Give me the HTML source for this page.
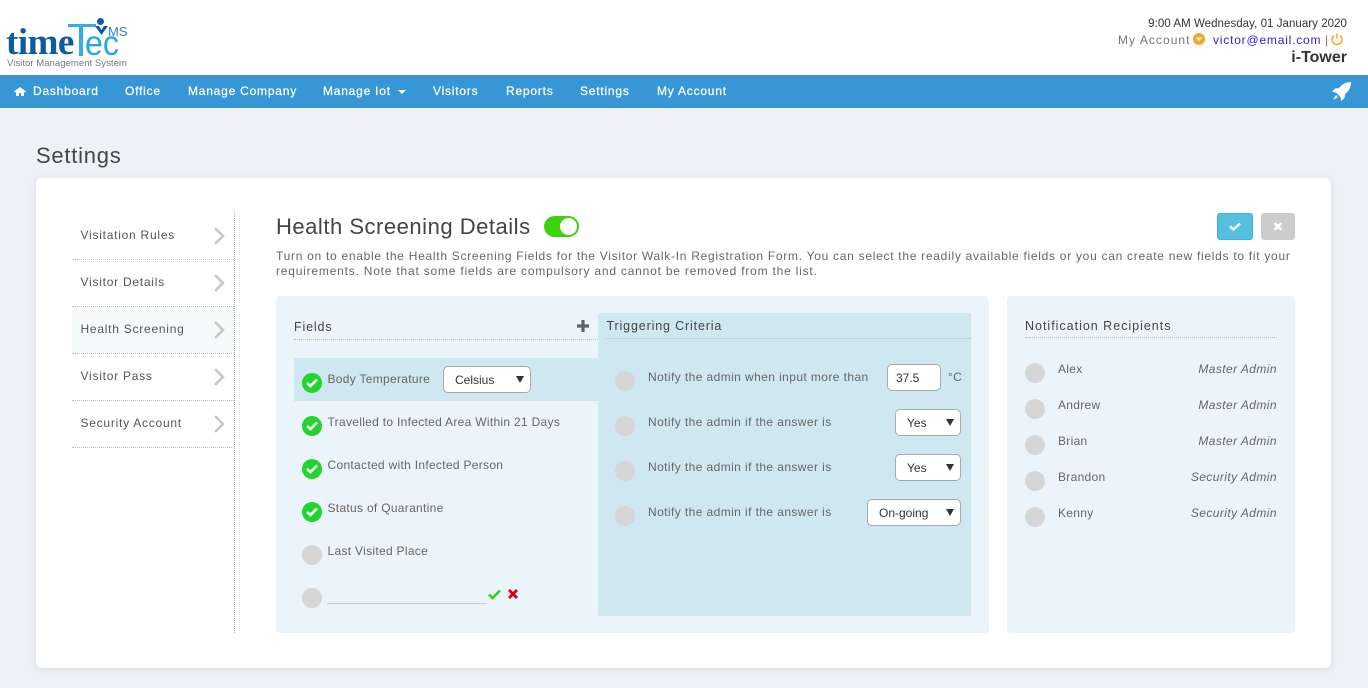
<!DOCTYPE html>
<html><head><meta charset="utf-8"><style>
*{box-sizing:border-box}
html,body{margin:0;padding:0}
body{width:1368px;height:688px;overflow:hidden;background:#eef2f6;position:relative;font-family:"Liberation Sans",sans-serif;font-size:12px;color:#666}
.a,.t{position:absolute;white-space:nowrap}
.t{letter-spacing:.3px;line-height:16px}
.n{letter-spacing:.41px}
.nav{color:#fff;top:83px;letter-spacing:.78px;font-size:12px;-webkit-text-stroke:.25px #fff}
.side{left:80.500px;color:#555;letter-spacing:.75px}
.hr{position:absolute;height:0;border-top:1px dotted #bbb}
.c{position:absolute;width:20px;height:20px;border-radius:50%;background:#d6d6d6}
.g{background:#22d52e}
.g svg{position:absolute;left:4px;top:5px}
.sel{position:absolute;height:27px;background:#fff;border:1px solid #a5aaad;border-radius:5px;color:#333;font-size:12px;line-height:26px;padding-left:11px}
.sel i{position:absolute;right:6px;top:9px;width:0;height:0;border-left:4px solid transparent;border-right:4px solid transparent;border-top:7px solid #333}
.r{text-align:right;font-style:italic;letter-spacing:.42px}
.h{font-size:12.500px;color:#444;letter-spacing:.85px}
</style></head><body>
<div class="a" style="left:0;top:0;width:1368px;height:75px;background:#fff"></div>
<!-- logo -->
<div class="a" style="left:6px;top:23px;font:bold 37px/40px 'Liberation Serif',serif;color:#0d5aa7;letter-spacing:-.5px">time</div>
<div class="a" style="left:68px;top:24px;width:28px;height:3px;background:#35ade4"></div>
<div class="a" style="left:78.500px;top:24px;width:4px;height:32px;background:#35ade4"></div>
<div class="a" style="left:84.500px;top:26px;font:35px/36px 'Liberation Sans',sans-serif;color:#2ba6e0;transform:scaleX(.92);transform-origin:0 0">ec</div>
<div class="a" style="left:96.500px;top:18px;width:7px;height:7px;border-radius:50%;background:#0d5aa7"></div>
<svg class="a" style="left:95px;top:26px" width="13" height="9"><path d="M0 0h4l2.500 4L9 0h4L6.500 9z" fill="#0d5aa7"/></svg>
<div class="a" style="left:108px;top:24px;font:13px/15px 'Liberation Sans',sans-serif;color:#3b7fb8">MS</div>
<div class="t" style="left:7px;top:57px;font-size:9.500px;color:#777;letter-spacing:.05px;line-height:14px">Visitor Management System</div>
<!-- top right -->
<div class="t" style="right:21px;top:16px;color:#333;letter-spacing:.05px;font-size:11.500px">9:00 AM Wednesday, 01 January 2020</div>
<div class="t" style="left:1118px;top:32px;color:#777;letter-spacing:1.05px">My Account</div>
<svg class="a" style="left:1193px;top:33px" width="12" height="12"><circle cx="6" cy="6" r="6" fill="#f5a623"/><path d="M3 4.500h6L6 8.500z" fill="#fff"/></svg>
<div class="t" style="left:1213px;top:32px;color:#2b1fe0;letter-spacing:.8px">victor@email.com</div>
<div class="t" style="left:1325px;top:32px;color:#777">|</div>
<svg class="a" style="left:1330px;top:32px" width="14" height="14" fill="none" stroke="#f5a623" stroke-width="1.500"><path d="M4 3.500a5 5 0 1 0 6 0"/><path d="M7 1.500v5"/></svg>
<div class="a" style="right:21px;top:49px;font:bold 16px/18px 'Liberation Sans',sans-serif;color:#333">i-Tower</div>
<!-- nav -->
<div class="a" style="left:0;top:75px;width:1368px;height:33px;background:#3797d6"></div>
<svg class="a" style="left:13.500px;top:86.500px" width="12" height="9" viewBox="0 0 12 9"><path d="M6 0L0 4.500l1 1 1-.8V9h3V6h2v3h3V4.700l1 .8 1-1z" fill="#fff"/></svg>
<div class="t nav" style="left:33px">Dashboard</div>
<div class="t nav" style="left:125px">Office</div>
<div class="t nav" style="left:188px">Manage Company</div>
<div class="t nav" style="left:323px">Manage Iot</div>
<div class="a" style="left:398px;top:90px;border-left:4.500px solid transparent;border-right:4.500px solid transparent;border-top:4px solid #fff"></div>
<div class="t nav" style="left:433px">Visitors</div>
<div class="t nav" style="left:506px">Reports</div>
<div class="t nav" style="left:580px">Settings</div>
<div class="t nav" style="left:657px">My Account</div>
<svg class="a" style="left:1331.500px;top:82px" width="19" height="19" viewBox="0 0 19 19"><path d="M19 0C14 0 10 2 7 6L3 6.500 0 10l4 .5L8.500 15l.5 4 3.500-3 .5-4c4-3 6-7 6-12z" fill="#fff"/><path d="M4 13l-3 5 5-3z" fill="#fff"/></svg>
<div class="a" style="left:36px;top:143px;font-size:22px;line-height:26px;color:#444;letter-spacing:.75px">Settings</div>
<!-- card -->
<div class="a" style="left:36px;top:178px;width:1295px;height:490px;background:#fff;border-radius:6px;box-shadow:0 1px 8px rgba(0,0,0,.1)"></div>
<!-- side -->
<div class="a" style="left:72px;top:307px;width:162px;height:46px;background:#f6fafb"></div>
<div class="a" style="left:234px;top:212px;height:421px;border-left:1px dotted #aaa"></div>
<div class="hr" style="left:72px;top:259px;width:162px"></div>
<div class="hr" style="left:72px;top:306px;width:162px"></div>
<div class="hr" style="left:72px;top:353px;width:162px"></div>
<div class="hr" style="left:72px;top:400px;width:162px"></div>
<div class="hr" style="left:72px;top:447px;width:162px"></div>
<div class="t side" style="top:227px">Visitation Rules</div>
<div class="t side" style="top:274px">Visitor Details</div>
<div class="t side" style="top:321px">Health Screening</div>
<div class="t side" style="top:368px">Visitor Pass</div>
<div class="t side" style="top:415px">Security Account</div>
<svg class="a" style="left:213px;top:226px" width="12" height="220" fill="none" stroke="#c8c8c8" stroke-width="2.600"><path d="M2 2l8 8-8 8M2 49l8 8-8 8M2 96l8 8-8 8M2 143l8 8-8 8M2 190l8 8-8 8"/></svg>
<!-- head -->
<div class="a" style="left:276px;top:212px;font-size:22px;line-height:30px;color:#444;letter-spacing:.52px">Health Screening Details</div>
<div class="a" style="left:544px;top:216px;width:35px;height:21px;border-radius:11px;background:#3fd30f"></div>
<div class="a" style="left:560px;top:218px;width:17px;height:17px;border-radius:50%;background:#fff"></div>
<div class="a" style="left:1217px;top:213px;width:36px;height:27px;border-radius:3px;background:#55bfe0;border:1px solid #46afd2"></div>
<svg class="a" style="left:1229px;top:222px" width="12" height="9"><path d="M1 4.500l3.500 3L11 1.500" fill="none" stroke="#fff" stroke-width="2.500"/></svg>
<div class="a" style="left:1261px;top:213px;width:34px;height:27px;border-radius:3px;background:#ccc"></div>
<svg class="a" style="left:1273px;top:222px" width="10" height="9"><path d="M1.500 1l7 7M8.500 1l-7 7" fill="none" stroke="#fff" stroke-width="2.500"/></svg>
<div class="t" style="left:276px;top:248px;letter-spacing:.716px">Turn on to enable the Health Screening Fields for the Visitor Walk-In Registration Form. You can select the readily available fields or you can create new fields to fit your</div>
<div class="t" style="left:276px;top:263px;letter-spacing:.79px">requirements. Note that some fields are compulsory and cannot be removed from the list.</div>
<!-- panels -->
<div class="a" style="left:276px;top:296px;width:713px;height:337px;background:#ebf4fa;border-radius:4px"></div>
<div class="a" style="left:1007px;top:296px;width:288px;height:337px;background:#ebf4fa;border-radius:4px"></div>
<div class="a" style="left:598px;top:313px;width:373px;height:303px;background:#cfe7f1"></div>
<div class="a" style="left:294px;top:358px;width:304px;height:43px;background:#cfe7f1"></div>
<div class="t h" style="left:294px;top:319px">Fields</div>
<svg class="a" style="left:577px;top:320px" width="12" height="12"><path d="M6 0v12M0 6h12" stroke="#5a6570" stroke-width="3.200"/></svg>
<div class="hr" style="left:294px;top:339px;width:304px"></div>
<div class="t h" style="left:606.500px;top:318px">Triggering Criteria</div>
<div class="hr" style="left:606px;top:338px;width:365px"></div>
<div class="c g" style="left:302px;top:373px"><svg width="12" height="10"><path d="M1 5l3.500 3L11 1.500" fill="none" stroke="#fff" stroke-width="2.600"/></svg></div>
<div class="c g" style="left:302px;top:416px"><svg width="12" height="10"><path d="M1 5l3.500 3L11 1.500" fill="none" stroke="#fff" stroke-width="2.600"/></svg></div>
<div class="c g" style="left:302px;top:459px"><svg width="12" height="10"><path d="M1 5l3.500 3L11 1.500" fill="none" stroke="#fff" stroke-width="2.600"/></svg></div>
<div class="c g" style="left:302px;top:502px"><svg width="12" height="10"><path d="M1 5l3.500 3L11 1.500" fill="none" stroke="#fff" stroke-width="2.600"/></svg></div>
<div class="c" style="left:302px;top:545px"></div>
<div class="c" style="left:302px;top:588px"></div>
<div class="t" style="left:327.500px;top:371px">Body Temperature</div>
<div class="sel" style="left:443px;top:366px;width:88px">Celsius<i></i></div>
<div class="t" style="left:327.500px;top:414px">Travelled to Infected Area Within 21 Days</div>
<div class="t" style="left:327.500px;top:457px">Contacted with Infected Person</div>
<div class="t" style="left:327.500px;top:500px">Status of Quarantine</div>
<div class="t" style="left:327.500px;top:543px">Last Visited Place</div>
<div class="a" style="left:327px;top:603px;width:160px;border-top:1px solid #c6cdd0"></div>
<svg class="a" style="left:488px;top:589px" width="13" height="11"><path d="M1 5.500l3.500 3.500L12 1.500" fill="none" stroke="#36d111" stroke-width="2.600"/></svg>
<svg class="a" style="left:508px;top:589px" width="10" height="10"><path d="M1 1l8 8M9 1l-8 8" fill="none" stroke="#d8020c" stroke-width="2.800"/></svg>
<div class="c" style="left:615px;top:371px"></div>
<div class="c" style="left:615px;top:416px"></div>
<div class="c" style="left:615px;top:461px"></div>
<div class="c" style="left:615px;top:506px"></div>
<div class="t n" style="left:648px;top:369px">Notify the admin when input more than</div>
<div class="t n" style="left:648px;top:414px">Notify the admin if the answer is</div>
<div class="t n" style="left:648px;top:459px">Notify the admin if the answer is</div>
<div class="t n" style="left:648px;top:504px">Notify the admin if the answer is</div>
<div class="sel" style="left:887px;top:364px;width:54px;padding-left:8px">37.5</div>
<div class="t" style="left:948px;top:369px">°C</div>
<div class="sel" style="left:895px;top:409px;width:66px">Yes<i></i></div>
<div class="sel" style="left:895px;top:454px;width:66px">Yes<i></i></div>
<div class="sel" style="left:867px;top:499px;width:94px">On-going<i></i></div>
<!-- recipients -->
<div class="t h" style="left:1025px;top:318px;letter-spacing:.99px">Notification Recipients</div>
<div class="hr" style="left:1025px;top:337px;width:252px"></div>
<div class="c" style="left:1025px;top:363px"></div>
<div class="c" style="left:1025px;top:399px"></div>
<div class="c" style="left:1025px;top:435px"></div>
<div class="c" style="left:1025px;top:471px"></div>
<div class="c" style="left:1025px;top:507px"></div>
<div class="t" style="left:1058px;top:361px">Alex</div>
<div class="t" style="left:1058px;top:397px">Andrew</div>
<div class="t" style="left:1058px;top:433px">Brian</div>
<div class="t" style="left:1058px;top:469px">Brandon</div>
<div class="t" style="left:1058px;top:505px">Kenny</div>
<div class="t r" style="right:91px;top:361px">Master Admin</div>
<div class="t r" style="right:91px;top:397px">Master Admin</div>
<div class="t r" style="right:91px;top:433px">Master Admin</div>
<div class="t r" style="right:91px;top:469px">Security Admin</div>
<div class="t r" style="right:91px;top:505px">Security Admin</div>
</body></html>
